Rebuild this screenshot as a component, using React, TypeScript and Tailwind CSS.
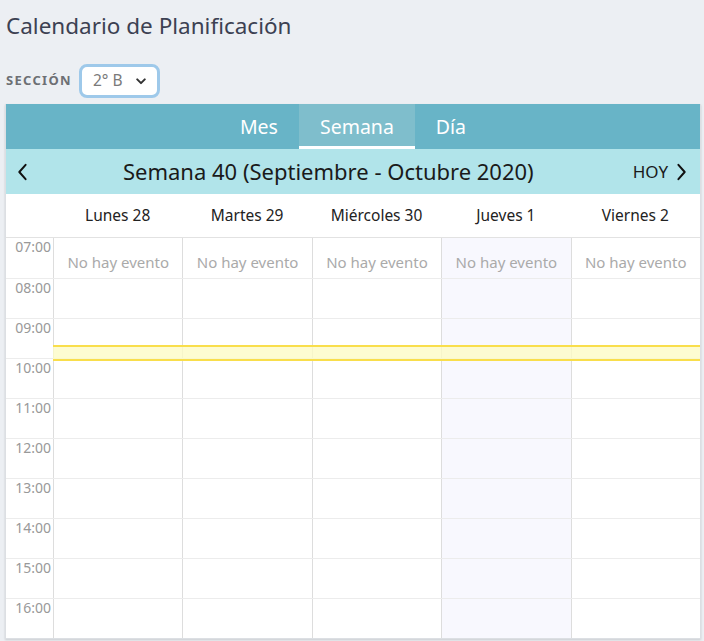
import React from 'react'

const days = ['Lunes 28', 'Martes 29', 'Miércoles 30', 'Jueves 1', 'Viernes 2']
const hours = ['07:00', '08:00', '09:00', '10:00', '11:00', '12:00', '13:00', '14:00', '15:00', '16:00']

const App = () => {
  return (
    <div className="min-h-[641px] bg-[#eceff3] pl-[5px] pr-[3px] font-['Noto_Sans',Lato,sans-serif]">
      {/*Title*/}
      <h1 className="pt-[10px] pl-[1px] text-[22.5px] leading-[32px] text-[#3c4152]">Calendario de Planificación</h1>

      {/*Section select*/}
      <div className="flex items-center mt-[22px] h-[34px]">
        <span className="pl-[1px] text-[13px] font-bold tracking-[1.3px] text-[#6d6f74]">SECCIÓN</span>
        <div className="ml-[7px] flex items-center h-[34px] w-[81px] rounded-[8px] border-[3px] border-[#9ec9ea] bg-white pl-[11px]">
          <span className="text-[15.5px] text-[#7a7a7a]">2° B</span>
          <svg viewBox="0 0 12 8" className="ml-[13px] w-[10px] h-[7px]">
            <path d="M1.5 1.5 L6 6 L10.5 1.5" fill="none" stroke="#333" strokeWidth={2.4} strokeLinecap="round" strokeLinejoin="round" />
          </svg>
        </div>
      </div>

      {/*Calendar card*/}
      <div className="mt-[6px] border border-[#dcdfe3] bg-white shadow-[0_1px_2px_rgba(0,0,0,0.15)]">
        {/*Tabs*/}
        <div className="flex justify-center h-[45px] bg-[#68b4c7] -mt-px">
          <div className="flex items-center px-[21px] text-[19.5px] text-white">Mes</div>
          <div className="flex items-center px-[21px] text-[19.5px] text-white bg-[#7fbecc] border-b-[3px] border-white pt-[3px]">Semana</div>
          <div className="flex items-center px-[21px] text-[19.5px] text-white">Día</div>
        </div>

        {/*Week nav*/}
        <div className="flex items-center h-[45px] bg-[#b1e4ea] px-[10px]">
          <svg viewBox="0 0 12 20" className="w-[12px] h-[18px]">
            <path d="M10 2 L3 10 L10 18" fill="none" stroke="#111" strokeWidth={2.2} strokeLinecap="round" strokeLinejoin="round" />
          </svg>
          <div className="flex-1 text-center text-[22px] text-[#1a1a1a] pr-[4px]">Semana 40 (Septiembre - Octubre 2020)</div>
          <span className="text-[17px] text-[#1a1a1a] mr-[8px]">HOY</span>
          <svg viewBox="0 0 12 20" className="w-[12px] h-[18px] mr-[2px]">
            <path d="M2 2 L9 10 L2 18" fill="none" stroke="#111" strokeWidth={2.2} strokeLinecap="round" strokeLinejoin="round" />
          </svg>
        </div>

        {/*Day headers*/}
        <div className="grid grid-cols-[47px_repeat(5,1fr)] h-[44px] border-b border-[#e2e2e2]">
          <div />
          {days.map((d) => (
            <div key={d} className="flex items-center justify-center pt-[1px] text-[15.5px] text-[#222]">{d}</div>
          ))}
        </div>

        {/*Hours grid*/}
        <div className="relative">
          {hours.map((h, i) => (
            <div key={h} className={`grid grid-cols-[47px_repeat(5,1fr)] h-[40px] ${i > 0 ? 'border-t border-[#ececec]' : ''}`}>
              <div className="text-right pr-[2px] text-[14px] leading-[16px] pt-[1px] text-[#999]">{h}</div>
              {days.map((d, j) => (
                <div key={d} className={`border-l border-[#dddddd] ${j === 3 ? 'bg-[#f8f8fe]' : ''} flex justify-center`}>
                  {i === 0 && <span className="pt-[15px] text-[15px] leading-[18px] text-[#aaa]">No hay evento</span>}
                </div>
              ))}
            </div>
          ))}

          {/*Current time band*/}
          <div className="absolute left-[47px] right-0 top-[107px] h-[16px] border-y-2 border-[#f9de4b] bg-[#fdfbc6]/80" />
        </div>
      </div>
    </div>
  )
}

export default App
